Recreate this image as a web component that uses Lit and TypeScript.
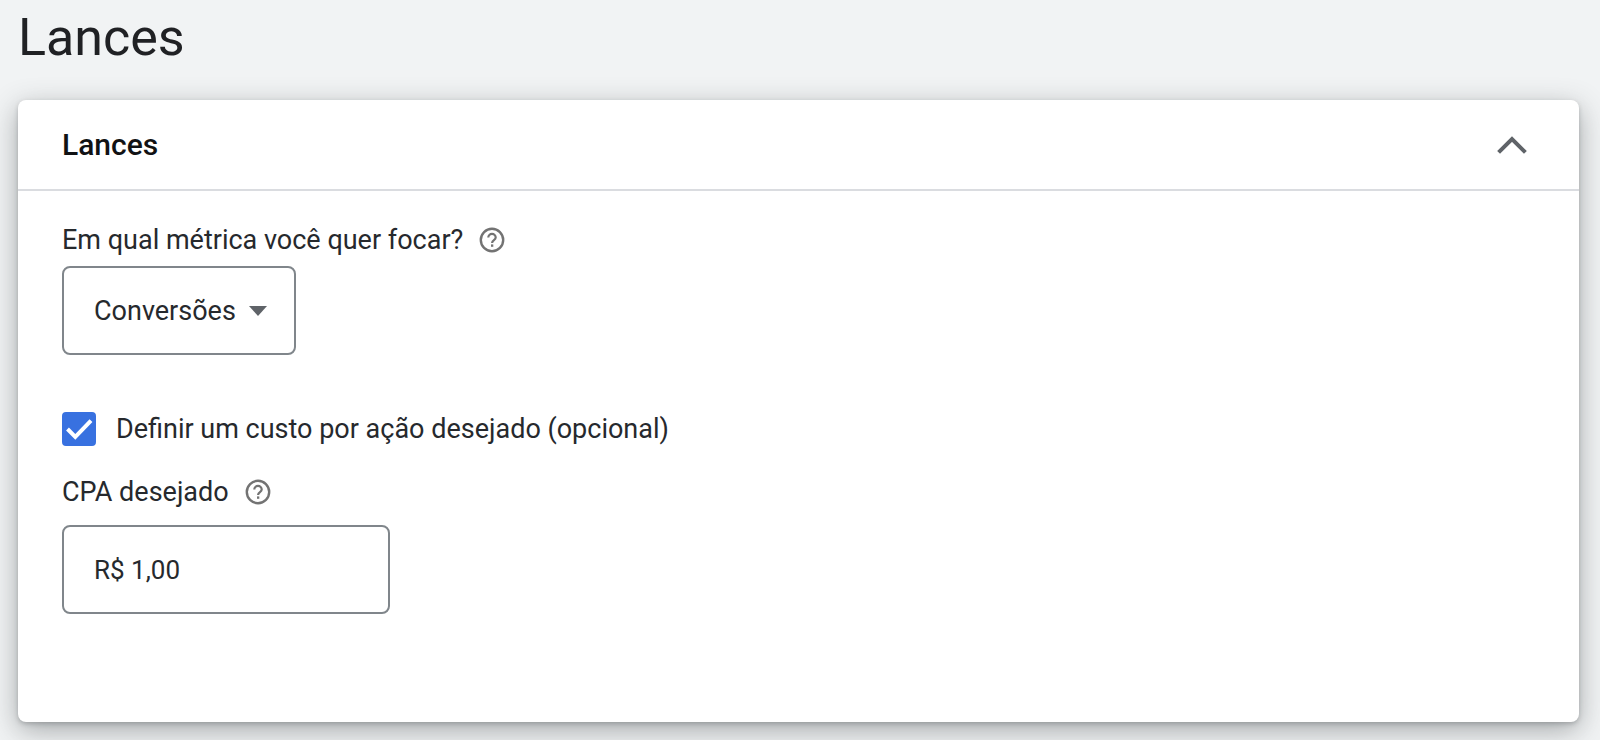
import { LitElement, html, css, svg } from "lit";
import { customElement, state } from "lit/decorators.js";

const helpIcon = svg`
  <circle cx="13" cy="13" r="11.2" fill="none" stroke="currentColor" stroke-width="2.4" />
  <path d="M9.3 10.6a3.7 3.7 0 0 1 7.4 0c0 2.4-3.6 2.7-3.6 5.3" fill="none" stroke="currentColor" stroke-width="2.2" />
  <rect x="12" y="17.4" width="2.3" height="2.4" fill="currentColor" />
`;

@customElement("help-button")
export class HelpButton extends LitElement {
  static styles = css`
    :host {
      display: inline-flex;
    }
    .help {
      display: inline-flex;
      padding: 0;
      border: 0;
      background: none;
      color: #737373;
      cursor: pointer;
    }
  `;

  render() {
    return html`<button class="help" type="button" aria-label="Ajuda">
      <svg width="26" height="26" viewBox="0 0 26 26" aria-hidden="true">${helpIcon}</svg>
    </button>`;
  }
}

@customElement("app-root")
export class AppRoot extends LitElement {
  @state() private open = true;
  @state() private targetEnabled = true;

  static styles = css`
    :host {
      display: block;
      box-sizing: border-box;
      min-height: 100vh;
      padding: 10px 21px 16px 18px;
      overflow: hidden;
      background: #f1f3f4;
      color: #26292d;
      font-family: Roboto, "Liberation Sans", sans-serif;
      font-size: 27px;
      line-height: 32px;
    }
    .page-title {
      margin: 0 0 34px;
      font-size: 52px;
      line-height: 56px;
      font-weight: 400;
      color: #202124;
    }
    .card {
      border-radius: 8px;
      background: #fff;
      box-shadow: 0 2px 4px rgba(60, 64, 67, 0.25), 0 8px 28px rgba(60, 64, 67, 0.42);
    }
    .card-head {
      display: flex;
      align-items: center;
      justify-content: space-between;
      padding: 25px 52px 24px 44px;
      border-bottom: 2px solid #dadce0;
    }
    .card-title {
      margin: 0;
      font-size: 30px;
      line-height: 40px;
      font-weight: 500;
      color: #111214;
    }
    .toggle {
      display: flex;
      padding: 0;
      border: 0;
      background: none;
      color: #5f6368;
      cursor: pointer;
    }
    .card-body {
      display: flex;
      flex-direction: column;
      align-items: flex-start;
      padding: 33px 44px 108px;
    }
    .label-row {
      display: flex;
      align-items: center;
      gap: 16px;
    }
    .picker {
      display: grid;
      align-items: center;
      margin-top: 10px;
    }
    .select,
    .amount {
      box-sizing: border-box;
      height: 89px;
      border: 2px solid #80868b;
      border-radius: 8px;
      background: transparent;
      color: inherit;
      font: inherit;
    }
    .select {
      grid-area: 1 / 1;
      appearance: none;
      padding: 0 58px 0 30px;
    }
    .arrow {
      grid-area: 1 / 1;
      justify-self: end;
      margin-right: 28px;
      pointer-events: none;
    }
    .check-row {
      display: flex;
      align-items: center;
      gap: 20px;
      margin: 57px 0 30px;
    }
    .check {
      display: grid;
      place-items: center;
    }
    .box {
      grid-area: 1 / 1;
      appearance: none;
      width: 34px;
      height: 34px;
      margin: 0;
      border: 3px solid #5f6368;
      border-radius: 4px;
    }
    .box:checked {
      border-color: #3871e0;
      background: #3871e0;
    }
    .tick {
      grid-area: 1 / 1;
      pointer-events: none;
    }
    .amount {
      width: 328px;
      max-width: 100%;
      margin-top: 17px;
      padding: 0 30px;
      font-size: 26px;
    }
  `;

  render() {
    return html`
      <h1 class="page-title">Lances</h1>
      <section class="card">
        <header class="card-head">
          <h2 class="card-title">Lances</h2>
          <button
            class="toggle"
            type="button"
            aria-label="Recolher"
            aria-expanded=${this.open}
            @click=${() => (this.open = !this.open)}
          >
            <svg width="30" height="18" viewBox="0 0 30 18" aria-hidden="true">
              <path d="M1.6 16.4 15 3l13.4 13.4" fill="none" stroke="currentColor" stroke-width="4" />
            </svg>
          </button>
        </header>
        ${this.open ? this.renderBody() : ""}
      </section>
    `;
  }

  private renderBody() {
    return html`
      <div class="card-body">
        <div class="label-row">
          <label for="metric">Em qual métrica você quer focar?</label>
          <help-button></help-button>
        </div>
        <div class="picker">
          <select class="select" id="metric">
            <option>Conversões</option>
          </select>
          <svg class="arrow" width="20" height="10" viewBox="0 0 20 10" aria-hidden="true">
            <path d="M1 0h18l-9 10z" fill="#5f6368" />
          </svg>
        </div>
        <div class="check-row">
          <span class="check">
            <input
              class="box"
              id="target"
              type="checkbox"
              .checked=${this.targetEnabled}
              @change=${(e: Event) => (this.targetEnabled = (e.target as HTMLInputElement).checked)}
            />
            <svg class="tick" width="34" height="34" viewBox="0 0 34 34" aria-hidden="true">
              <path d="M5.5 17l7.8 7.8L29 8.6" fill="none" stroke="#fff" stroke-width="4" />
            </svg>
          </span>
          <label for="target">Definir um custo por ação desejado (opcional)</label>
        </div>
        <div class="label-row">
          <label for="cpa">CPA desejado</label>
          <help-button></help-button>
        </div>
        <input class="amount" id="cpa" type="text" value="R$ 1,00" ?disabled=${!this.targetEnabled} />
      </div>
    `;
  }
}
